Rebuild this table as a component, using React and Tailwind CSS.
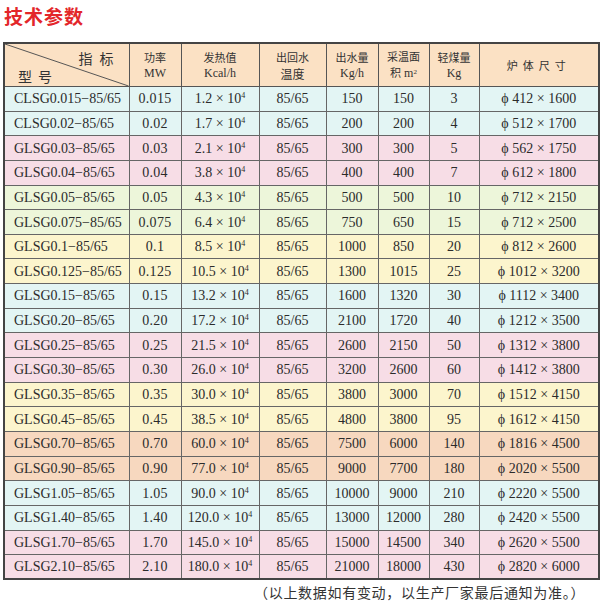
import React from "react";

const rows = [
  ["CLSG0.015−85/65", "0.015", "1.2", "150", "150", "3", "412 × 1600", "cyan"],
  ["CLSG0.02−85/65", "0.02", "1.7", "200", "200", "4", "512 × 1700", "cyan"],
  ["GLSG0.03−85/65", "0.03", "2.1", "300", "300", "5", "562 × 1750", "pink"],
  ["GLSG0.04−85/65", "0.04", "3.8", "400", "400", "7", "612 × 1800", "pink"],
  ["GLSG0.05−85/65", "0.05", "4.3", "500", "500", "10", "712 × 2150", "green"],
  ["GLSG0.075−85/65", "0.075", "6.4", "750", "650", "15", "712 × 2500", "green"],
  ["GLSG0.1−85/65", "0.1", "8.5", "1000", "850", "20", "812 × 2600", "yellow"],
  ["GLSG0.125−85/65", "0.125", "10.5", "1300", "1015", "25", "1012 × 3200", "yellow"],
  ["GLSG0.15−85/65", "0.15", "13.2", "1600", "1320", "30", "1112 × 3400", "cyan"],
  ["GLSG0.20−85/65", "0.20", "17.2", "2100", "1720", "40", "1212 × 3500", "cyan"],
  ["GLSG0.25−85/65", "0.25", "21.5", "2600", "2150", "50", "1312 × 3800", "pink"],
  ["GLSG0.30−85/65", "0.30", "26.0", "3200", "2600", "60", "1412 × 3800", "pink"],
  ["GLSG0.35−85/65", "0.35", "30.0", "3800", "3000", "70", "1512 × 4150", "yellow"],
  ["GLSG0.45−85/65", "0.45", "38.5", "4800", "3800", "95", "1612 × 4150", "yellow"],
  ["GLSG0.70−85/65", "0.70", "60.0", "7500", "6000", "140", "1816 × 4500", "peach"],
  ["GLSG0.90−85/65", "0.90", "77.0", "9000", "7700", "180", "2020 × 5500", "peach"],
  ["GLSG1.05−85/65", "1.05", "90.0", "10000", "9000", "210", "2220 × 5500", "cyan"],
  ["GLSG1.40−85/65", "1.40", "120.0", "13000", "12000", "280", "2420 × 5500", "cyan"],
  ["GLSG1.70−85/65", "1.70", "145.0", "15000", "14500", "340", "2620 × 5500", "pink"],
  ["GLSG2.10−85/65", "2.10", "180.0", "21000", "18000", "430", "2820 × 6000", "pink"],
];

const bg = {
  cyan: "bg-[#e3f5f4]",
  pink: "bg-[#f7dde6]",
  green: "bg-[#edf6da]",
  yellow: "bg-[#fcf5cd]",
  peach: "bg-[#f7d8bf]",
};

const cjk = { fontFamily: '"Noto Sans CJK SC", sans-serif' };

function HeadCell({ top, bottom, bottomCjk }) {
  return (
    <th className="border border-[#555] font-normal text-[#333] leading-[15px] align-middle">
      <div className="text-[11px]" style={cjk}>{top}</div>
      <div className="text-[12px] mt-[1px]" style={bottomCjk ? cjk : undefined}>
        {bottom}
      </div>
    </th>
  );
}

export default function App() {
  return (
    <div
      className="w-[600px] h-[604px] bg-white overflow-hidden"
      style={{ fontFamily: '"Liberation Serif", "Noto Sans CJK SC", serif' }}
    >
      <h1
        className="text-[19px] font-bold text-[#e3262a] leading-none pt-[6px] pl-[4px] tracking-[1px]"
        style={cjk}
      >
        技术参数
      </h1>

      <table className="mt-[17px] ml-[3px] w-[595px] table-fixed border-collapse border-2 border-[#444] text-[#2b2b2b]">
        <colgroup>
          <col className="w-[125px]" />
          <col className="w-[52px]" />
          <col className="w-[78px]" />
          <col className="w-[67px]" />
          <col className="w-[52px]" />
          <col className="w-[51px]" />
          <col className="w-[50px]" />
          <col className="w-[120px]" />
        </colgroup>
        <thead>
          <tr className="h-[42px] bg-[#fbe1c4]">
            <th className="relative border border-[#555] font-normal p-0">
              <svg className="absolute inset-0 w-full h-full" viewBox="0 0 125 42" preserveAspectRatio="none">
                <line x1="0" y1="0" x2="125" y2="42" stroke="#555" strokeWidth="1" />
              </svg>
              <div className="flex flex-col h-[42px] text-[14px] text-[#333]" style={cjk}>
                <div className="text-right pr-[8px] pt-[6px] leading-[16px] tracking-[7px]">指标</div>
                <div className="text-left pl-[13px] pt-[2px] leading-[16px] tracking-[6px]">型号</div>
              </div>
            </th>
            <HeadCell top="功率" bottom="MW" />
            <HeadCell top="发热值" bottom="Kcal/h" />
            <HeadCell top="出回水" bottom="温度" bottomCjk />
            <HeadCell top="出水量" bottom="Kg/h" />
            <th className="border border-[#555] font-normal text-[#333] leading-[15px]">
              <div className="text-[11px]" style={cjk}>采温面</div>
              <div className="text-[12px] mt-[1px]">
                <span style={cjk} className="text-[11px]">积</span> m<sup className="text-[7px]">2</sup>
              </div>
            </th>
            <HeadCell top="轻煤量" bottom="Kg" />
            <th className="border border-[#555] font-normal text-[#333] text-[11px] tracking-[5px]" style={cjk}>
              炉体尺寸
            </th>
          </tr>
        </thead>
        <tbody>
          {rows.map((r) => (
            <tr key={r[0]} className={`h-[24.65px] ${bg[r[7]]}`}>
              <td className="border border-[#666] text-[14px] pl-[9px] whitespace-nowrap">{r[0]}</td>
              <td className="border border-[#666] text-[14px] text-center tracking-[0.3px]">{r[1]}</td>
              <td className="border border-[#666] text-[14px] text-center whitespace-nowrap">
                {r[2]} × 10<sup className="text-[8px] relative -top-[5px]">4</sup>
              </td>
              <td className="border border-[#666] text-[14px] text-center">85/65</td>
              <td className="border border-[#666] text-[14px] text-center">{r[3]}</td>
              <td className="border border-[#666] text-[14px] text-center">{r[4]}</td>
              <td className="border border-[#666] text-[14px] text-center">{r[5]}</td>
              <td className="border border-[#666] text-[14px] text-center whitespace-nowrap">ϕ {r[6]}</td>
            </tr>
          ))}
        </tbody>
      </table>

      <p className="pl-[254px] pt-[2px] text-[14px] leading-[20px] text-[#333] tracking-[0.7px]" style={cjk}>
        （以上数据如有变动，以生产厂家最后通知为准。）
      </p>
    </div>
  );
}
